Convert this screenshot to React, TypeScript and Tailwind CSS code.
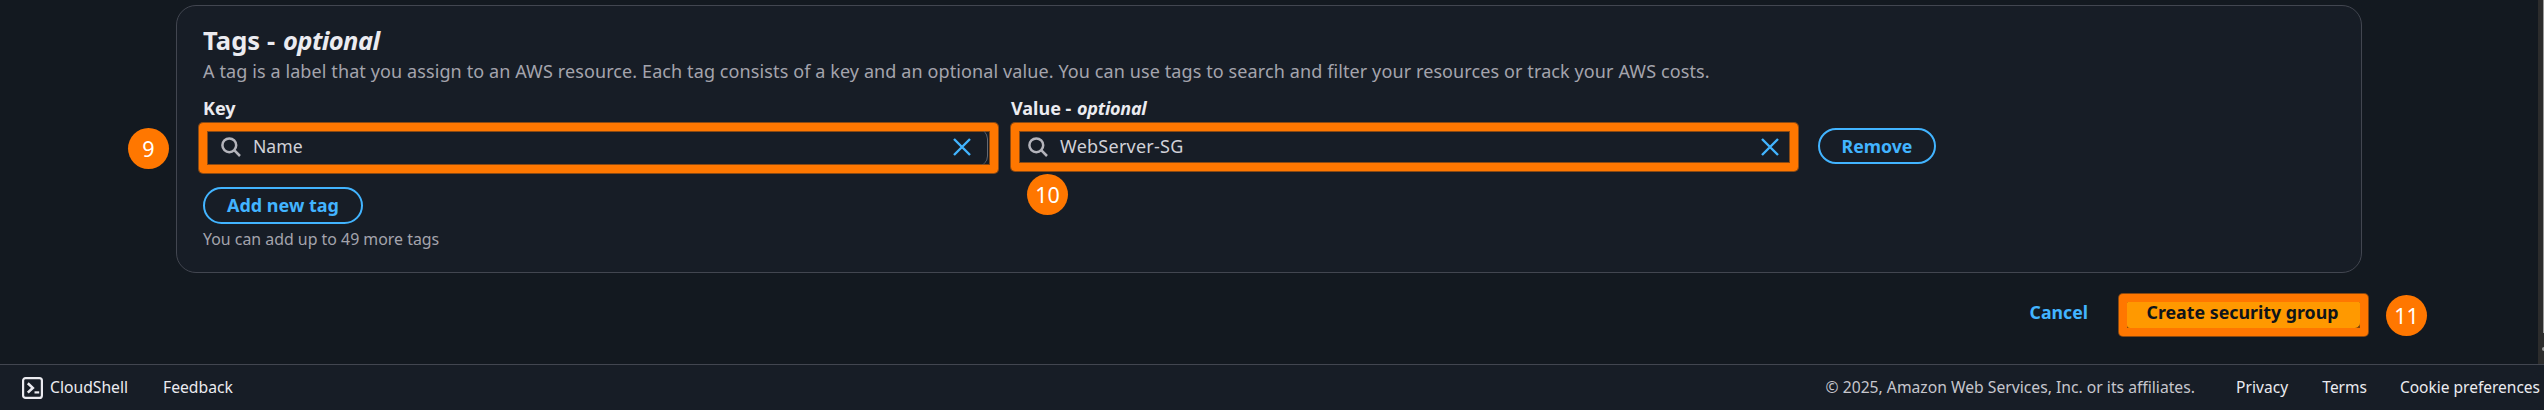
import React from "react";

const SearchIcon = () => (
  <svg className="h-5 w-5 shrink-0" viewBox="0 0 20 20" fill="none" stroke="#b4b4bb" strokeWidth="2.5">
    <circle cx="8.3" cy="8.3" r="6.9" />
    <path d="M13.2 13.2L19 19" />
  </svg>
);

const CloseIcon = ({ className }: { className: string }) => (
  <svg
    className={`h-[18px] w-[18px] shrink-0 ${className}`}
    viewBox="0 0 18 18"
    fill="none"
    stroke="#42b4ff"
    strokeWidth="2.4"
  >
    <path d="M1 1L17 17M17 1L1 17" />
  </svg>
);

const TerminalIcon = () => (
  <svg className="mr-[7px] h-[22px] w-[21px] shrink-0" viewBox="0 0 21 22" fill="none" stroke="#ebebf0" strokeWidth="2.2">
    <rect x="1.1" y="1.1" width="18.8" height="19.8" rx="2.5" />
    <path d="M5.8 6.2L10.8 10.9L5.8 15.6" strokeWidth="2.6" />
    <path d="M12.5 15.4H17.2" />
  </svg>
);

const Badge = ({ n, className }: { n: number; className: string }) => (
  <span
    className={`absolute flex h-[41px] w-[41px] items-center justify-center rounded-full bg-[#ff7700] text-[21.5px] leading-none font-normal text-white ${className}`}
  >
    {n}
  </span>
);

const frame =
  "m-[1px] rounded-[4px] border-[8px] border-[#ff7700] shadow-[0_0_0_1px_rgba(255,119,0,0.5),inset_0_0_0_1px_rgba(255,119,0,0.5)]";

export default function App() {
  return (
    <div className="flex h-[410px] w-[2544px] flex-col overflow-hidden bg-[#131920] font-['Noto_Sans',sans-serif] text-[#ebebf0]">
      <div className="flex h-[364px]">
        <main className="flex-1 pt-[5px] pl-[176px]">
          <section className="relative h-[268px] w-[2186px] rounded-[20px] border border-[#424650] bg-[#171d26] px-[26px] pt-[17px]">
            <h2 className="h-[34px] text-[25.5px] leading-[34px] font-bold tracking-[0.1px] whitespace-nowrap">
              Tags - <em className="ml-px tracking-[-0.6px]">optional</em>
            </h2>
            <p className="h-[28px] text-[18px] leading-[28px] tracking-[0.105px] whitespace-nowrap text-[#a4a4ad]">
              A tag is a label that you assign to an AWS resource. Each tag consists of a key and an optional value. You can use tags to search and filter your resources or track your AWS costs.
            </p>
            <div className="mt-[11px] flex text-[18px] leading-[25px] font-bold">
              <span className="w-[808px]">Key</span>
              <span>
                Value - <em className="ml-px tracking-[-0.25px]">optional</em>
              </span>
            </div>
            <div className="mt-[1px] -ml-[5px] flex items-start">
              <div className={`relative flex h-[50px] w-[799px] items-center overflow-hidden pb-[3px] pl-[14px] ${frame}`}>
                <SearchIcon />
                <span className="mb-[1px] ml-[12px] flex-1 text-[17.6px] leading-[24px] text-[#d1d1d8]">Name</span>
                <CloseIcon className="mr-[19px]" />
                <span className="absolute top-[-2px] right-[2px] h-[37px] w-5 rounded-r-[10px] border-r border-[#656871]" />
              </div>
              <div className={`ml-[12px] flex h-[48px] w-[787px] items-center pb-[1px] pl-[9px] ${frame}`}>
                <SearchIcon />
                <span className="mb-[1px] ml-[12px] flex-1 text-[18px] leading-[24px] tracking-[0.25px] text-[#d1d1d8]">
                  WebServer-SG
                </span>
                <CloseIcon className="mr-[11px]" />
              </div>
              <button className="mt-[6px] ml-[19px] h-[36px] w-[118px] rounded-full border-2 border-[#42b4ff] text-[17.7px] font-bold text-[#42b4ff]">
                Remove
              </button>
            </div>
            <button className="mt-[13px] block h-[37px] w-[160px] rounded-full border-2 border-[#42b4ff] text-[18px] font-bold text-[#42b4ff]">
              Add new tag
            </button>
            <p className="mt-[5px] text-[15.9px] leading-[20px] text-[#a4a4ad]">You can add up to 49 more tags</p>
            <Badge n={9} className="top-[122px] left-[-49px]" />
            <Badge n={10} className="top-[168px] left-[850px]" />
          </section>
          <div className="relative mt-[20px] flex w-[2193px] items-start justify-end font-bold">
            <button className="mr-[30px] h-[38px] text-[17.7px] text-[#42b4ff]">Cancel</button>
            <div className={`h-[42px] w-[249px] bg-[#0f141a] ${frame}`}>
              <button className="block h-full w-full rounded-[1px] rounded-br-[5px] rounded-bl-[3px] bg-[#ff9900] pr-[2px] pb-[6px] text-[17.8px] leading-[20px] text-[#0f141a]">
                Create security group
              </button>
            </div>
            <Badge n={11} className="top-[2px] left-[2210px]" />
          </div>
        </main>
        <div className="flex h-[364px] w-[6px] flex-col items-end bg-[#2c2c2c]">
          <span className="h-[333px] w-px bg-[#9a9a9a]" />
          <span className="mt-[14px] h-[4px] w-[2px] rounded-l-full bg-[#9a9a9a]" />
        </div>
      </div>
      <footer className="flex h-[46px] items-center border-t border-[#424650] bg-[#171d26] pr-[4px] pl-[22px] text-[15.5px] whitespace-nowrap">
        <TerminalIcon />
        <span className="w-[113px] text-[15.7px]">CloudShell</span>
        <span className="text-[15.7px]">Feedback</span>
        <span className="ml-auto text-[15.7px] text-[#c6c6cd]">© 2025, Amazon Web Services, Inc. or its affiliates.</span>
        <span className="ml-[41px] tracking-[0.1px]">Privacy</span>
        <span className="ml-[34px]">Terms</span>
        <span className="ml-[33px]">Cookie preferences</span>
      </footer>
    </div>
  );
}
